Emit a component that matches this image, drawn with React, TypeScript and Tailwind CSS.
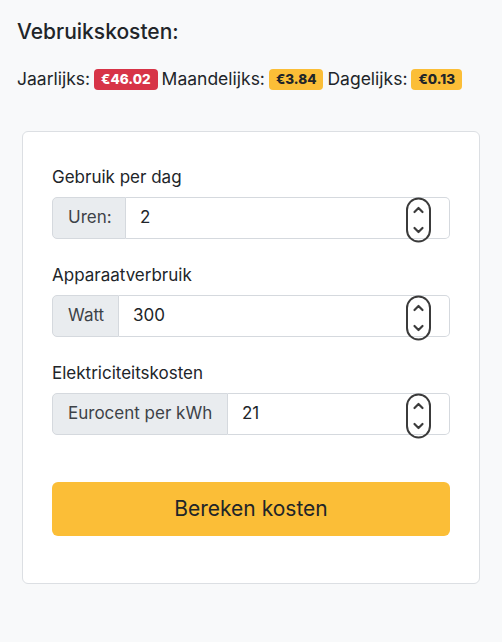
import React from "react";

function Spinner() {
  return (
    <svg
      className="pointer-events-none absolute right-[16px] top-[-1px]"
      width="28"
      height="46"
      viewBox="0 0 28 46"
      fill="none"
    >
      <rect x="2" y="1.5" width="23" height="43" rx="11.5" stroke="#3b3b3b" strokeWidth="2" />
      <path d="M9.5 15 L13.5 11 L17.5 15" stroke="#3b3b3b" strokeWidth="2.2" strokeLinecap="round" strokeLinejoin="round" />
      <path d="M9.5 31 L13.5 35 L17.5 31" stroke="#3b3b3b" strokeWidth="2.2" strokeLinecap="round" strokeLinejoin="round" />
    </svg>
  );
}

function Field({ label, addon, addonW, value }: { label: string; addon: string; addonW: string; value: string }) {
  return (
    <div className="mb-6">
      <div className="mb-2 text-[17px] leading-[24px] text-[#212529]">{label}</div>
      <div className="flex h-[42px]">
        <div
          className={`${addonW} flex items-center rounded-l-[5px] border border-[#d5d9de] bg-[#e9ecef] pl-[15px] text-[17px] text-[#3d4248]`}
        >
          {addon}
        </div>
        <div className="relative flex flex-1 items-center rounded-r-[5px] border border-l-0 border-[#d5d9de] bg-white pl-[14px] text-[17px] text-[#212529]">
          {value}
          <Spinner />
        </div>
      </div>
    </div>
  );
}

export default function App() {
  return (
    <div
      className="min-h-screen bg-[#f8f9fa] text-[#212529]"
      style={{ fontFamily: "Inter, 'Noto Sans', sans-serif" }}
    >
      <div className="pl-[17px] pt-[20px]">
        <div className="text-[21px] font-medium leading-[24px]">Vebruikskosten:</div>
        <div className="mt-[22px] flex items-center text-[17.5px] leading-[26px]">
          <span>Jaarlijks:</span>
          <span className="ml-[4px] mr-[4px] flex h-[21px] items-center rounded-[4px] bg-[#d73447] px-[7px] text-[13.5px] font-extrabold text-white">
            €46.02
          </span>
          <span>Maandelijks:</span>
          <span className="ml-[4px] mr-[4px] flex h-[21px] items-center rounded-[4px] bg-[#fbbe37] px-[7px] text-[13.5px] font-extrabold text-[#212529]">
            €3.84
          </span>
          <span>Dagelijks:</span>
          <span className="ml-[4px] flex h-[21px] items-center rounded-[4px] bg-[#fbbe37] px-[7px] text-[13.5px] font-extrabold text-[#212529]">
            €0.13
          </span>
        </div>
      </div>
      <div className="ml-[22px] mt-[39px] h-[453px] w-[458px] rounded-[6px] border border-[#dcdfe3] bg-white px-[29px] pt-[33px]">
        <Field label="Gebruik per dag" addon="Uren:" addonW="w-[74px]" value="2" />
        <Field label="Apparaatverbruik" addon="Watt" addonW="w-[67px]" value="300" />
        <Field label="Elektriciteitskosten" addon="Eurocent per kWh" addonW="w-[176px]" value="21" />
        <button className="mt-[47px] flex h-[54px] w-full items-center justify-center rounded-[6px] bg-[#fbbe37] text-[21px] text-[#212529]">
          Bereken kosten
        </button>
      </div>
    </div>
  );
}
